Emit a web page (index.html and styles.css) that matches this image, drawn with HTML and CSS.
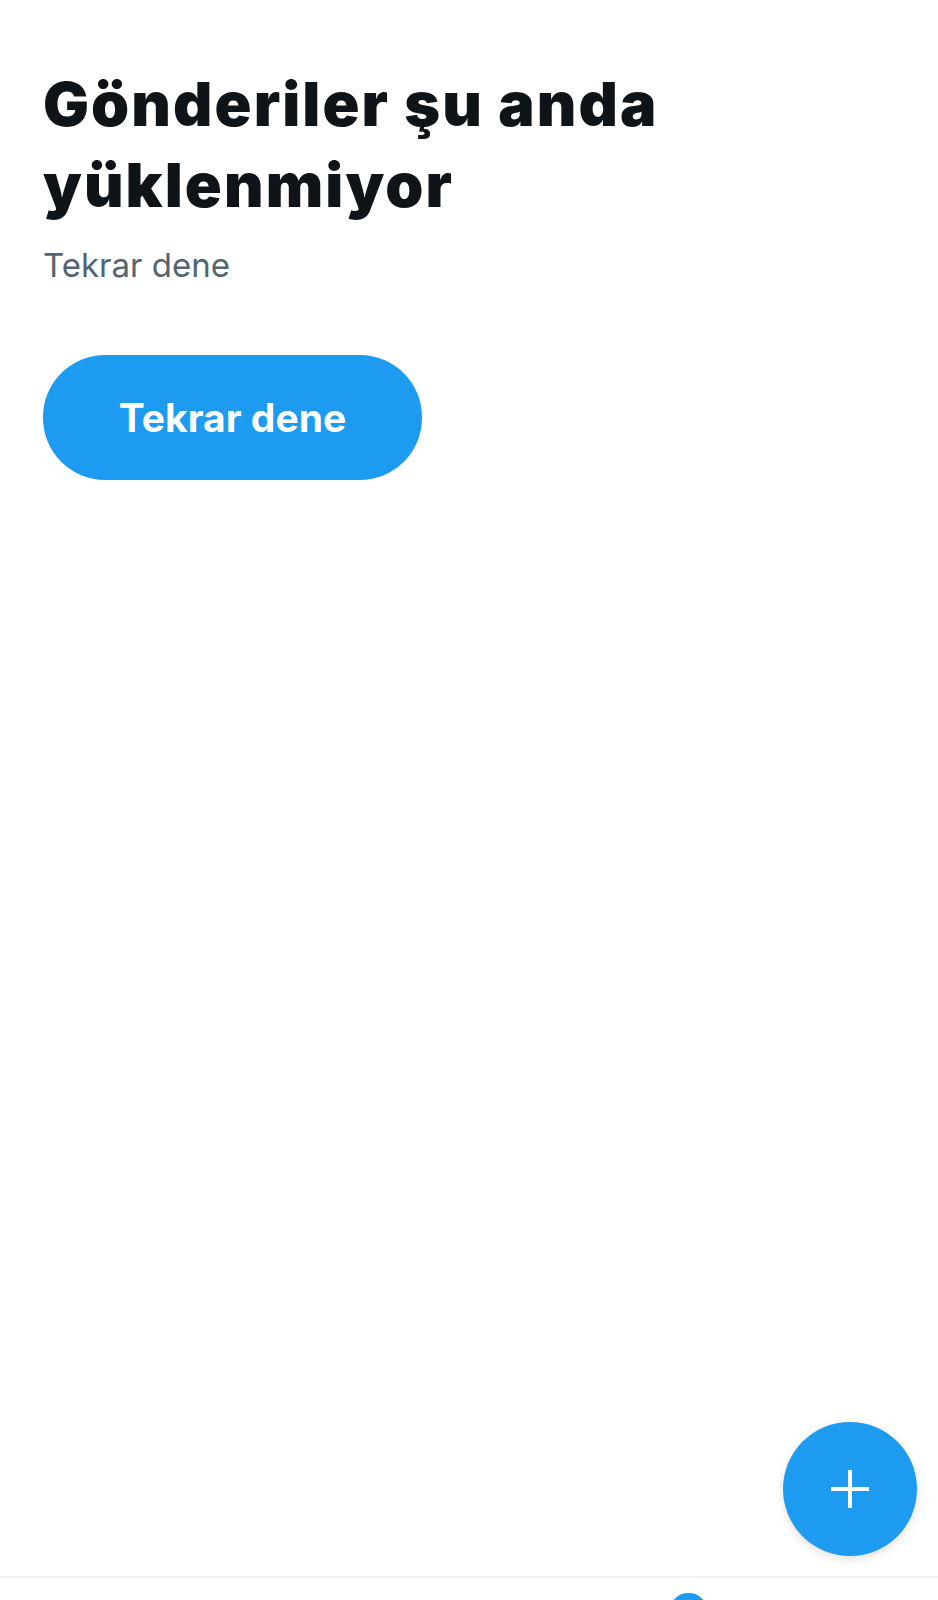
FILE: index.html
```html
<!DOCTYPE html>
<html lang="tr">
<head>
<meta charset="utf-8">
<title>Gönderiler şu anda yüklenmiyor</title>
<link rel="stylesheet" href="styles.css">
</head>
<body>
<div class="screen">
  <main class="content">
    <h1 class="title">Gönderiler şu anda yüklenmiyor</h1>
    <p class="subtitle">Tekrar dene</p>
    <button class="retry" type="button">Tekrar dene</button>
  </main>
  <button class="fab" type="button" aria-label="Gönderi oluştur">
    <svg viewBox="0 0 40 40" width="40" height="40" aria-hidden="true">
      <path d="M20 1v38M1 20h38" stroke="#fff" stroke-width="4" fill="none"/>
    </svg>
  </button>
  <nav class="tabbar">
    <span class="tab-badge"></span>
  </nav>
</div>
</body>
</html>
```
FILE: styles.css
```css
html, body {
  margin: 0;
  padding: 0;
  background: #ffffff;
}
body {
  font-family: Inter, "Liberation Sans", Arial, sans-serif;
  color: #0f1419;
}
.screen {
  position: relative;
  height: 1600px;
  display: flex;
  flex-direction: column;
  overflow: hidden;
}
.content {
  flex: 1;
  display: flex;
  flex-direction: column;
  align-items: flex-start;
  padding: 64px 43px 0 43px;
}
.title {
  margin: 0;
  font-size: 61px;
  line-height: 81px;
  font-weight: 900;
  letter-spacing: 2.1px;
  color: #0f1419;
  max-width: 760px;
}
.subtitle {
  margin: 19px 0 0 0;
  font-size: 33px;
  line-height: 40px;
  font-weight: 400;
  color: #536471;
}
.retry {
  margin-top: 70px;
  width: 379px;
  height: 125px;
  border: none;
  border-radius: 62px;
  background: #1d9bf0;
  color: #ffffff;
  font-family: inherit;
  font-size: 39px;
  font-weight: 700;
  padding: 0;
  cursor: pointer;
}
.fab {
  position: absolute;
  left: 783px;
  top: 1422px;
  width: 134px;
  height: 134px;
  border-radius: 50%;
  border: none;
  background: #1d9bf0;
  box-shadow: 0 3px 8px rgba(101, 80, 40, 0.18);
  display: flex;
  align-items: center;
  justify-content: center;
  padding: 0;
}
.tabbar {
  box-sizing: border-box;
  flex: 0 0 24px;
  height: 24px;
  border-top: 2px solid #eff3f4;
  display: flex;
  padding-left: 670px;
  padding-top: 15px;
  overflow: hidden;
}
.tab-badge {
  display: block;
  flex: 0 0 37px;
  width: 37px;
  height: 24px;
  border-radius: 18px 18px 6px 6px;
  background: #1d9bf0;
}
```
